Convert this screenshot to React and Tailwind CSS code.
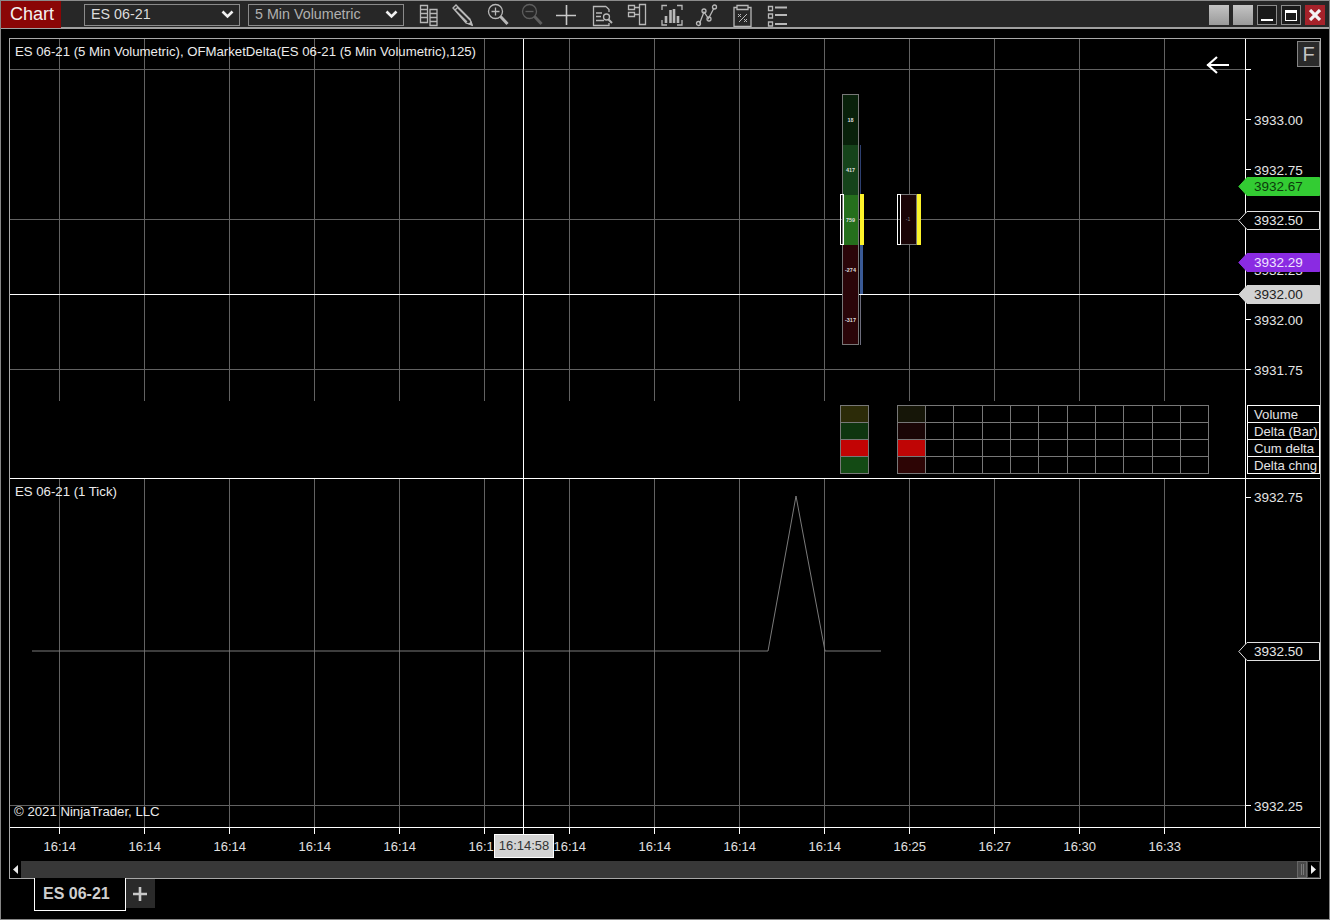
const GX = [59, 144, 229, 314, 399, 484, 569, 654, 739, 824, 909, 994, 1079, 1164];
const TIMES = ["16:14","16:14","16:14","16:14","16:14","16:1","16:14","16:14","16:14","16:14","16:25","16:27","16:30","16:33"];
const ROWS = [405, 422, 439, 456, 473];
const COLS = [897, 925, 953, 982, 1010, 1038, 1067, 1095, 1123, 1152, 1180, 1208];

function Ic({ className, children }) {
  return (
    <svg width="24" height="24" viewBox="0 0 24 24" fill="none" stroke="#b8b8b8" strokeWidth="1.3" className={`shrink-0 mt-px ${className}`}>
      {children}
    </svg>
  );
}

function Select({ label, dim }) {
  return (
    <div className={`w-[156px] h-[22px] mt-px border border-[#8a8a8a] flex items-center justify-between pl-[6px] pr-[5px] text-[14.300px] ${dim ? "text-[#b0b0b0]" : "text-[#dcdcdc]"}`}>
      <span className="pt-px">{label}</span>
      <svg width="13" height="9" viewBox="0 0 13 9" fill="none" stroke="#f0f0f0" strokeWidth="2.6"><path d="M1.5 1.5 6.5 6.5 11.5 1.5" /></svg>
    </div>
  );
}

function Toolbar() {
  return (
    <div className="h-[29px] shrink-0 bg-[#272727] border-t border-b-2 border-t-[#8c8c8c] border-b-[#a0a0a0] flex items-center">
      <div className="w-[60px] h-[27px] bg-[#8a0606] text-[#f2f2f2] text-[18px] leading-[27px] pl-[9px] shrink-0">Chart</div>
      <div className="ml-[23px]"><Select label="ES 06-21" /></div>
      <div className="ml-[8px]"><Select label="5 Min Volumetric" dim /></div>

      <Ic className="ml-[14px]"><path d="M2.5 2.5h7v17h-7zM2.5 6.500h7M2.500 10.500h7M2.500 14.500h7M12 6.500h7v16h-7zM12 10.500h7M12 14.500h7M12 18.500h7" /></Ic>
      <Ic className="ml-[8px]"><path d="M3 5 6 2 20 16 22 22 16 20zM5 7l3-3M7 4l13 13M4 6l13 13" /><path d="M18.500 20.500 22 22 21 18.500" fill="#b8b8b8" /></Ic>
      <Ic className="ml-[12px]"><circle cx="9.500" cy="8.500" r="7" /><path d="M9.500 4.500v8M5.500 8.500h8" /><path d="M14.500 13.500 21.500 21" strokeWidth="3" /></Ic>
      <Ic className="ml-[10px]"><g stroke="#5e5e5e"><circle cx="9.500" cy="8.500" r="7" /><path d="M5.500 8.500h8" /><path d="M14.500 13.500 21.500 21" strokeWidth="3" /></g></Ic>
      <Ic className="ml-[10px]"><path d="M12.500 2v20M2 12.500h20" strokeWidth="1.600" stroke="#c8c8c8" /></Ic>
      <Ic className="ml-[13px]"><path d="M15 3.500H2.500v19h15.500V20M15 3.500l3 3V9M5 10h6M5 13.500h5M5 17.500h8" /><circle cx="15.500" cy="14" r="3" /><path d="M17.500 16.500 21 20" strokeWidth="2" /></Ic>
      <Ic className="ml-[11px]"><path d="M2.500 2.500h6v4h-6zM2.500 9.500h6v4h-6zM13.500 1.500h6v20h-6zM8.500 4.500h5M8.500 11.500h5" /></Ic>
      <Ic className="ml-[10px]">
        <path d="M2 7V2.500h5M17 2.500h5V7M2 17v5h5M17 22h5v-5" />
        <path d="M6 20v-7M10.500 20V7M14 20V6M18 20v-7" strokeWidth="2.600" />
      </Ic>
      <Ic className="ml-[11px]"><path d="M4.500 20.500 9 9l4.500 6.500L19 5" /><circle cx="3.500" cy="20.500" r="2" /><circle cx="9" cy="8" r="2" /><circle cx="14" cy="16" r="2" /><circle cx="19.500" cy="4" r="2" /></Ic>
      <Ic className="ml-[12px]"><path d="M6 4.500H3v19h17v-19h-3M6 2.500h11v4H6z" /><path d="M7 11l3 3M10 11l-3 3M13 16l3 3M16 16l-3 3M8 19l8-8" strokeWidth="1" /></Ic>
      <Ic className="ml-[11px]"><path d="M2.500 3.500h4v4h-4zM2.500 11h4v4h-4zM2.500 19h4v4h-4z" /><path d="M9 4.500h12M9 12h12M9 21h12" strokeWidth="1.800" /></Ic>

      <div className="ml-auto mr-[4px] mt-[2px] flex gap-[4px]">
        <div className="w-[20px] h-[20px] bg-gradient-to-b from-[#c4c4c4] to-[#9a9a9a]" />
        <div className="w-[20px] h-[20px] bg-gradient-to-b from-[#c4c4c4] to-[#9a9a9a]" />
        <div className="w-[20px] h-[20px] border border-[#8c8c8c] bg-[#1a1a1a] flex items-end justify-center pb-[3px]">
          <div className="w-[12px] h-[2px] bg-white" />
        </div>
        <div className="w-[20px] h-[20px] border border-[#8c8c8c] bg-[#1a1a1a] flex items-center justify-center">
          <div className="w-[12px] h-[11px] border border-white border-t-[3px]" />
        </div>
        <div className="w-[20px] h-[20px] bg-[#a5222a] flex items-center justify-center">
          <svg width="12" height="12" viewBox="0 0 12 12" stroke="#f4f4f4" strokeWidth="3.200"><path d="M1 1 11 11M11 1 1 11" /></svg>
        </div>
      </div>
    </div>
  );
}

function Grid({ y1, y2 }) {
  return GX.map((x) => <line key={x} x1={x + 0.5} x2={x + 0.5} y1={y1} y2={y2} stroke="#626262" />);
}

function Cells() {
  return (
    <g shapeRendering="crispEdges">
      <rect x="840.500" y="405.500" width="28" height="17" fill="#2c2b08" />
      <rect x="840.500" y="422.500" width="28" height="17" fill="#0e350f" />
      <rect x="840.500" y="439.500" width="28" height="17" fill="#c20404" />
      <rect x="840.500" y="456.500" width="28" height="17" fill="#134a14" />
      <rect x="897.500" y="405.500" width="28" height="17" fill="#161608" />
      <rect x="897.500" y="422.500" width="28" height="17" fill="#1a0606" />
      <rect x="897.500" y="439.500" width="28" height="17" fill="#bf0505" />
      <rect x="897.500" y="456.500" width="28" height="17" fill="#2d0505" />
      {ROWS.map((y) => <line key={y} x1="840" x2="869" y1={y + 0.5} y2={y + 0.5} stroke="#777" />)}
      <line x1="840.500" x2="840.500" y1="405" y2="474" stroke="#777" />
      <line x1="868.500" x2="868.500" y1="405" y2="474" stroke="#777" />
      {ROWS.map((y) => <line key={y} x1="897" x2="1209" y1={y + 0.5} y2={y + 0.5} stroke="#777" />)}
      {COLS.map((x) => <line key={x} x1={x + 0.5} x2={x + 0.5} y1="405" y2="474" stroke="#777" />)}
    </g>
  );
}

function Bars() {
  const segs = [
    [94, "#08200a", "18"],
    [144, "#15431a", "417"],
    [194, "#256f1c", "759"],
    [244, "#2a0508", "-274"],
    [294, "#2a0508", "-317"],
  ];
  return (
    <g>
      <g shapeRendering="crispEdges">
        <rect x="842.500" y="94.500" width="16" height="250" fill="none" stroke="#777" />
        {segs.map(([y, c]) => <rect key={y} x="843" y={y + 1} width="15" height={y === 294 ? 49 : 50} fill={c} />)}
        <rect x="860" y="145" width="1" height="49" fill="#2d3f70" />
        <rect x="860" y="245" width="3" height="49" fill="#3a5a96" />
        <rect x="860" y="295" width="1" height="50" fill="#6d6d7d" />
        <rect x="840.500" y="194.500" width="3" height="50" fill="none" stroke="#fff" />
        <rect x="860" y="194" width="4" height="51" fill="#fdf32a" />
        <rect x="901" y="195" width="15" height="49" fill="#1a0406" />
        <rect x="900.500" y="194.500" width="16" height="50" fill="none" stroke="#777" />
        <rect x="897.500" y="194.500" width="3" height="50" fill="none" stroke="#fff" />
        <rect x="917" y="194" width="4" height="51" fill="#fdf32a" />
      </g>
      {segs.map(([y, , t]) => (
        <text key={y} x="850.500" y={y + 28} textAnchor="middle" fontSize="5.500" fontWeight="700" fill="#dcdcdc" fontFamily="Liberation Sans">{t}</text>
      ))}
      <text x="908" y="221" textAnchor="middle" fontSize="5" fill="#8a8a8a" fontFamily="Liberation Sans">-1</text>
    </g>
  );
}

function Flag({ top, label, bg, text, border }) {
  return (
    <div className="absolute left-[1228px] w-[82px] h-[19px]" style={{ top }}>
      <svg width="82" height="19" viewBox="0 0 82 19" className="absolute inset-0">
        <path d="M9 .5H81.500V18.500H9L.8 9.500Z" fill={bg} stroke={border} />
      </svg>
      <span className="absolute left-[16px] top-0 leading-[19px] text-[13.500px]" style={{ color: text }}>{label}</span>
    </div>
  );
}

function Tick({ label, className, labelClass = "-mt-[6px]" }) {
  return (
    <div className={`flex items-start shrink-0 ${className}`}>
      <div className="w-[5px] h-px bg-white shrink-0" />
      {label && <div className={`ml-[3px] h-[16px] leading-[16px] text-[13.500px] text-[#e4e4e4] ${labelClass}`}>{label}</div>}
    </div>
  );
}

function Panel1() {
  return (
    <div className="relative flex h-[440px] shrink-0 border-b border-white">
      <div className="relative w-[1236px] shrink-0 border-r border-white">
        <svg width="1235" height="439" viewBox="10 39 1235 439" className="block">
          <g shapeRendering="crispEdges">
            <Grid y1={39} y2={401} />
            {[69, 219, 369].map((y) => <line key={y} x1="10" x2="1245" y1={y + 0.5} y2={y + 0.5} stroke="#626262" />)}
            <line x1="10" x2="1246" y1="294.500" y2="294.500" stroke="#fff" />
            <line x1="523.500" x2="523.500" y1="39" y2="478" stroke="#fff" />
          </g>
          <Bars />
          <Cells />
        </svg>
        <div className="absolute left-[5px] top-[5px] text-[13.200px] leading-[15px] text-[#ececec] whitespace-nowrap">ES 06-21 (5 Min Volumetric), OFMarketDelta(ES 06-21 (5 Min Volumetric),125)</div>
        <svg width="26" height="20" viewBox="0 0 26 20" fill="none" stroke="#fff" strokeWidth="2.200" className="absolute left-[1195px] top-[16px]">
          <path d="M2 10H24M12 2 3 10 12 18" />
        </svg>
      </div>

      <div className="flex-1 flex flex-col pt-[30px]">
        <Tick className="h-[50px]" />
        <Tick className="h-[50px]" label="3933.00" />
        <Tick className="h-[50px]" label="3932.75" />
        <Tick className="h-[50px]" />
        <Tick className="h-[50px]" label="3932.25" />
        <Tick className="h-[50px]" label="3932.00" />
        <Tick className="h-[36px]" label="3931.75" />
        <div className="ml-px w-[73px] h-[69px] border border-white flex flex-col text-[13.200px] text-[#e4e4e4] leading-[18px] whitespace-nowrap">
          <div className="h-[17px] border-b border-white pl-[6px]">Volume</div>
          <div className="h-[17px] border-b border-white pl-[6px]">Delta (Bar)</div>
          <div className="h-[17px] border-b border-white pl-[6px]">Cum delta</div>
          <div className="h-[16px] pl-[6px]">Delta chng</div>
        </div>
      </div>

      <div className="absolute left-[1287px] top-[2px] w-[23px] h-[26px] bg-[#2a2a2a] border border-[#858585] text-[#c4c4c4] text-[20px] leading-[24px] text-center">F</div>
      <Flag top={138} label="3932.67" bg="#33cc33" text="#0c3a0c" border="#33cc33" />
      <Flag top={172} label="3932.50" bg="#000" text="#e8e8e8" border="#e0e0e0" />
      <Flag top={214} label="3932.29" bg="#8a2be2" text="#f0e4ff" border="#8a2be2" />
      <Flag top={246} label="3932.00" bg="#d3d3d3" text="#222" border="#d3d3d3" />
    </div>
  );
}

function Panel2() {
  return (
    <div className="relative flex h-[349px] shrink-0 border-b border-white">
      <div className="relative w-[1236px] shrink-0 border-r border-white">
        <svg width="1235" height="348" viewBox="10 479 1235 348" className="block">
          <g shapeRendering="crispEdges">
            <Grid y1={479} y2={827} />
            <line x1="10" x2="1245" y1="805.500" y2="805.500" stroke="#626262" />
            <line x1="523.500" x2="523.500" y1="479" y2="827" stroke="#fff" />
          </g>
          <path d="M32 651H768L796 496 825 651H881" fill="none" stroke="#7a7a7a" />
        </svg>
        <div className="absolute left-[5px] top-[5px] text-[13.200px] leading-[15px] text-[#ececec]">ES 06-21 (1 Tick)</div>
        <div className="absolute left-[4px] top-[325px] text-[13.200px] leading-[15px] text-[#ececec]">© 2021 NinjaTrader, LLC</div>
      </div>
      <div className="flex-1 flex flex-col pt-[18px]">
        <Tick className="h-[308px]" label="3932.75" labelClass="-mt-[7px]" />
        <Tick label="3932.25" />
      </div>
      <Flag top={163} label="3932.50" bg="#000" text="#e8e8e8" border="#e0e0e0" />
    </div>
  );
}

function TimeAxis() {
  return (
    <div className="relative h-[33px] shrink-0 flex pl-[7px]">
      {GX.map((x, i) => (
        <div key={x} className="w-[85px] shrink-0 flex flex-col items-center">
          <div className="w-px h-[6px] bg-white" />
          <div className="w-[32px] text-[13px] leading-[15px] mt-[5px] text-[#e0e0e0] whitespace-nowrap">{TIMES[i]}</div>
        </div>
      ))}
      <div className="absolute left-[513px] top-0 w-px h-[6px] bg-white" />
      <div className="absolute left-[484px] top-[6px] w-[60px] h-[24px] bg-[#d3d3d3] border border-white text-[#333] text-[13px] leading-[22px] text-center">16:14:58</div>
    </div>
  );
}

function Scrollbar() {
  return (
    <div className="h-[17px] shrink-0 bg-[#383838] flex items-center justify-between">
      <div className="w-[11px] h-[17px] bg-black flex items-center justify-center">
        <svg width="5" height="9" viewBox="0 0 5 9"><path d="M5 0V9L0 4.500Z" fill="#e8e8e8" /></svg>
      </div>
      <div className="flex items-center">
        <div className="w-[10px] h-[17px] bg-[#4a4a4a] border border-[#666] flex items-center justify-center">
          <div className="w-[3px] h-[11px] border-x border-[#7a7a7a]" />
        </div>
        <div className="w-[13px] h-[17px] bg-black border border-[#444] flex items-center justify-center">
          <svg width="5" height="9" viewBox="0 0 5 9"><path d="M0 0V9L5 4.500Z" fill="#f0f0f0" /></svg>
        </div>
      </div>
    </div>
  );
}

export default function App() {
  return (
    <div className="w-[1330px] h-[920px] bg-black flex flex-col border-x border-b border-[#858585] overflow-hidden" style={{ fontFamily: '"Liberation Sans", Arial, sans-serif' }}>
      <Toolbar />
      <div className="mx-[8px] mt-[9px] h-[841px] shrink-0 border border-[#a8a8a8] flex flex-col">
        <Panel1 />
        <Panel2 />
        <TimeAxis />
        <Scrollbar />
      </div>
      <div className="flex items-start ml-[33px] -mt-px">
        <div className="w-[92px] h-[33px] border border-white border-t-0 bg-black text-[#cfcfcf] text-[16px] font-bold leading-[32px] pl-[8px] relative">ES 06-21</div>
        <div className="w-[29px] h-[29px] mt-px bg-[#2a2a2a] flex items-center justify-center pr-[2px]">
          <svg width="14" height="14" viewBox="0 0 14 14" stroke="#c8c8c8" strokeWidth="2.600"><path d="M7 0v14M0 7h14" /></svg>
        </div>
      </div>
    </div>
  );
}
